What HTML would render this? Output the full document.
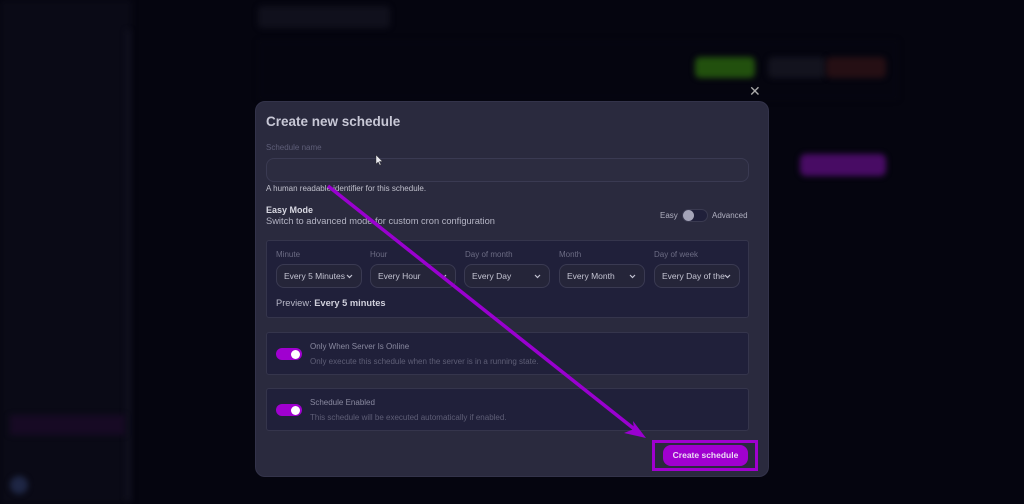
<!DOCTYPE html>
<html><head><meta charset="utf-8"><style>
*{box-sizing:border-box;margin:0;padding:0}
body{width:1024px;height:504px;overflow:hidden;background:#05050f;font-family:"Liberation Sans",sans-serif;position:relative}
.bg{position:absolute;filter:blur(3px)}
.modal{position:absolute;left:255px;top:101px;width:514px;height:376px;background:#2a2a3e;border-radius:10px;border:1px solid #33334a}
.t{position:absolute;white-space:nowrap}
.sel{position:absolute;top:264px;width:86px;height:24px;border:1px solid #3a3a52;background:#252539;border-radius:8px;font-size:8.5px;color:#c4c4d2;padding:6px 7px}
.sel svg{position:absolute;right:8px;top:9px}
.lab{position:absolute;top:250px;font-size:8px;color:#6c6c84}
.box{position:absolute;background:#20203a;border:1px solid #35354c;border-radius:3px}
.tg{position:absolute;width:26px;height:12px;border-radius:6px;background:#a000d0}
.tg:after{content:"";position:absolute;right:2px;top:1.5px;width:9px;height:9px;border-radius:50%;background:#fff}
</style></head><body>
<div class="bg" style="left:0;top:0;width:132px;height:504px;background:#0a0a16"></div>
<div class="bg" style="left:126px;top:30px;width:4px;height:470px;background:#111120"></div>
<div class="bg" style="left:10px;top:415px;width:115px;height:20px;background:#170a24"></div>
<div class="bg" style="left:10px;top:476px;width:18px;height:18px;border-radius:50%;background:#1e2644"></div>
<div class="bg" style="left:258px;top:6px;width:132px;height:22px;background:#10101c;border-radius:4px"></div>
<div class="bg" style="left:258px;top:40px;width:640px;height:60px;background:#09091446"></div>
<div class="bg" style="left:695px;top:57px;width:60px;height:21px;background:#22500e;border-radius:5px"></div>
<div class="bg" style="left:768px;top:57px;width:58px;height:21px;background:#13131e;border-radius:5px"></div>
<div class="bg" style="left:826px;top:57px;width:60px;height:21px;background:#250f14;border-radius:5px"></div>
<div class="bg" style="left:800px;top:154px;width:86px;height:22px;background:#480c64;border-radius:6px"></div>
<div class="t" style="left:749px;top:83px;color:#aaa;font-size:14px">✕</div>
<div class="modal"></div>
<div class="t" style="left:266px;top:114px;font-size:13.5px;font-weight:bold;color:#c8c8d6">Create new schedule</div>
<div class="t" style="left:266px;top:143px;font-size:8px;color:#5e5e78">Schedule name</div>
<div style="position:absolute;left:266px;top:158px;width:483px;height:24px;border:1px solid #3a3a52;border-radius:8px;background:#2c2c40"></div>
<div class="t" style="left:266px;top:184px;font-size:8px;color:#c0c0cc">A human readable identifier for this schedule.</div>
<div class="t" style="left:266px;top:205px;font-size:9px;font-weight:bold;color:#d8d8e2">Easy Mode</div>
<div class="t" style="left:266px;top:216px;font-size:9.3px;color:#b4b4c4">Switch to advanced mode for custom cron configuration</div>
<div class="t" style="left:660px;top:211px;font-size:8px;color:#b0b0c0">Easy</div>
<div style="position:absolute;left:682px;top:209px;width:26px;height:13px;border-radius:7px;background:#20203a;border:1px solid #3a3a50"></div>
<div style="position:absolute;left:683px;top:210px;width:11px;height:11px;border-radius:50%;background:#a4a4b8"></div>
<div class="t" style="left:712px;top:211px;font-size:8px;color:#b0b0c0">Advanced</div>
<div class="box" style="left:266px;top:240px;width:483px;height:78px"></div>
<div class="lab" style="left:276px">Minute</div><div class="lab" style="left:370px">Hour</div><div class="lab" style="left:465px">Day of month</div><div class="lab" style="left:559px">Month</div><div class="lab" style="left:654px">Day of week</div>
<div class="sel" style="left:276px">Every 5 Minutes<svg width="7" height="5"><path d="M1 1l2.5 2.5L6 1" stroke="#c4c4d2" stroke-width="1.2" fill="none"/></svg></div>
<div class="sel" style="left:370px">Every Hour<svg width="7" height="5"><path d="M1 1l2.5 2.5L6 1" stroke="#c4c4d2" stroke-width="1.2" fill="none"/></svg></div>
<div class="sel" style="left:464px">Every Day<svg width="7" height="5"><path d="M1 1l2.5 2.5L6 1" stroke="#c4c4d2" stroke-width="1.2" fill="none"/></svg></div>
<div class="sel" style="left:559px">Every Month<svg width="7" height="5"><path d="M1 1l2.5 2.5L6 1" stroke="#c4c4d2" stroke-width="1.2" fill="none"/></svg></div>
<div class="sel" style="left:654px">Every Day of the<svg width="7" height="5"><path d="M1 1l2.5 2.5L6 1" stroke="#c4c4d2" stroke-width="1.2" fill="none"/></svg></div>
<div class="t" style="left:276px;top:298px;font-size:9.3px;color:#b8b8c8">Preview: <b style="color:#d0d0dc">Every 5 minutes</b></div>
<div class="box" style="left:266px;top:332px;width:483px;height:43px"></div>
<div class="tg" style="left:276px;top:348px"></div>
<div class="t" style="left:310px;top:342px;font-size:8px;color:#8a8aa0">Only When Server Is Online</div>
<div class="t" style="left:310px;top:357px;font-size:8px;color:#5e5e76">Only execute this schedule when the server is in a running state.</div>
<div class="box" style="left:266px;top:388px;width:483px;height:43px"></div>
<div class="tg" style="left:276px;top:404px"></div>
<div class="t" style="left:310px;top:398px;font-size:8px;color:#8a8aa0">Schedule Enabled</div>
<div class="t" style="left:310px;top:413px;font-size:8px;color:#5e5e76">This schedule will be executed automatically if enabled.</div>
<div style="position:absolute;left:663px;top:445px;width:85px;height:21px;border-radius:8px;background:#a000d0;color:#ecdcf4;font-size:8.5px;font-weight:bold;text-align:center;line-height:21px">Create schedule</div>
<svg style="position:absolute;left:0;top:0" width="1024" height="504">
<rect x="653.5" y="441.5" width="103" height="28" fill="none" stroke="#a000d0" stroke-width="3"/>
<line x1="328" y1="186" x2="638" y2="432" stroke="#9a00d0" stroke-width="3.5"/>
<polygon points="646,438 624,433 634,429 633,421" fill="#9a00d0"/>
<path d="M376 155v9l2.2-2 1.6 3.2 1.2-.6-1.6-3.1h3z" fill="#e8e8ee" stroke="#222" stroke-width=".4"/>
</svg>
</body></html>
